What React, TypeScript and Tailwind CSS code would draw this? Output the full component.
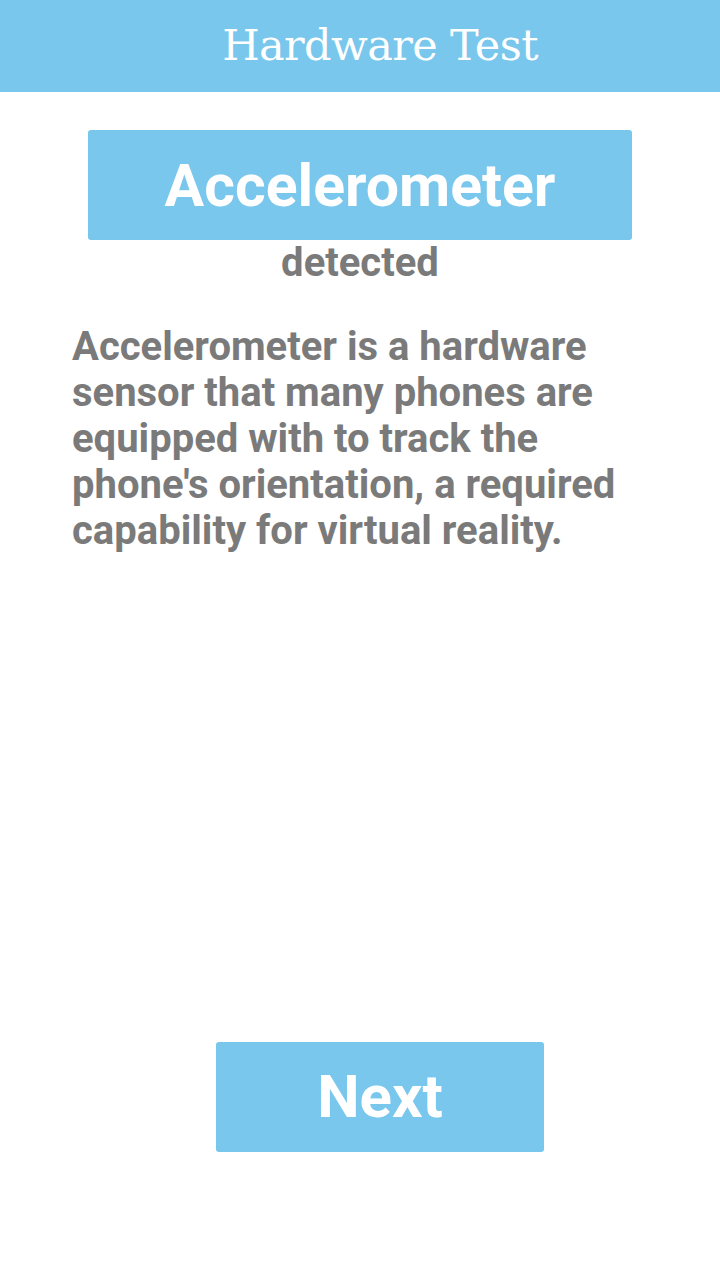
import React from "react";

const App: React.FC = () => {
  return (
    <div className="min-h-screen w-[720px] bg-white flex flex-col font-['Roboto',sans-serif]">
      <header className="h-[92px] bg-[#79c7ec] flex items-center justify-center pl-[40px]">
        <h1 className="text-[43px] leading-none text-white font-['DejaVu_Serif',serif] tracking-[-0.6px] pb-[2px]">
          Hardware Test
        </h1>
      </header>

      <div className="flex flex-col items-center pt-[38px]">
        <div className="w-[544px] h-[110px] bg-[#79c7ec] rounded-[3px] flex items-center justify-center">
          <span className="text-[59px] font-bold text-white leading-none">
            Accelerometer
          </span>
        </div>
        <p className="text-[40px] font-bold text-[#7a7a7a] leading-[46px]">
          detected
        </p>
      </div>

      <p className="px-[72px] mt-[38px] text-[40px] font-bold text-[#7a7a7a] leading-[46px]">
        Accelerometer is a hardware sensor that many phones are equipped with to
        track the phone's orientation, a required capability for virtual
        reality.
      </p>

      <div className="flex justify-center mt-[488px] pl-[40px]">
        <button className="w-[328px] h-[110px] bg-[#79c7ec] rounded-[3px] flex items-center justify-center text-[60px] font-bold text-white leading-none">
          Next
        </button>
      </div>
    </div>
  );
};

export default App;
